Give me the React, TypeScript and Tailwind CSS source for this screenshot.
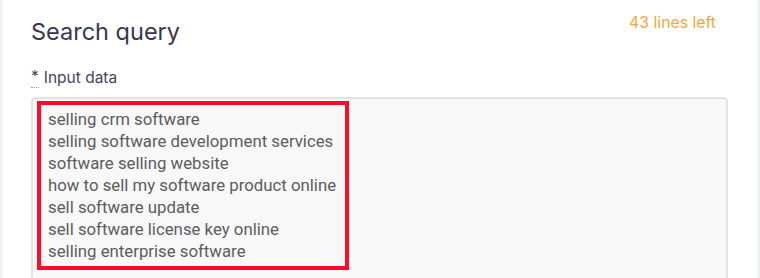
const lines = [
  "selling crm software",
  "selling software development services",
  "software selling website",
  "how to sell my software product online",
  "sell software update",
  "sell software license key online",
  "selling enterprise software",
];

export default function App() {
  return (
    <div className="flex h-[278px] w-[760px] overflow-hidden bg-[#f1f2f5] px-[3px]">
      <div className="flex flex-1 flex-col bg-white pl-[28px] pr-[29px] font-['Inter',sans-serif]">
        <div className="flex items-start justify-between">
          <h2 className="mt-[17px] text-[23.5px] leading-[30px] text-[#37364f]">Search query</h2>
          <span className="mt-[13px] mr-[12px] text-[15.8px] leading-5 text-[#f5a83a]">43 lines left</span>
        </div>
        <label className="mt-[20px] flex items-center gap-[5px] text-[15.5px] leading-5 text-[#45445a]">
          <span className="border-b border-dotted border-[#999]">*</span>
          Input data
        </label>
        <div className="relative mt-[9px] flex-1 rounded-t-[5px] border-x-2 border-t-2 border-[#e2e3e8] bg-[#f8f8f8] px-[15px] pt-[9px] font-['Roboto',sans-serif] text-[16.8px] leading-[22px] text-[#5c5c60]">
          {lines.map((l) => (
            <div key={l}>{l}</div>
          ))}
          <div className="absolute left-[4px] top-[2px] h-[169px] w-[312px] border-4 border-[#ff0a2a]" />
        </div>
      </div>
    </div>
  );
}
